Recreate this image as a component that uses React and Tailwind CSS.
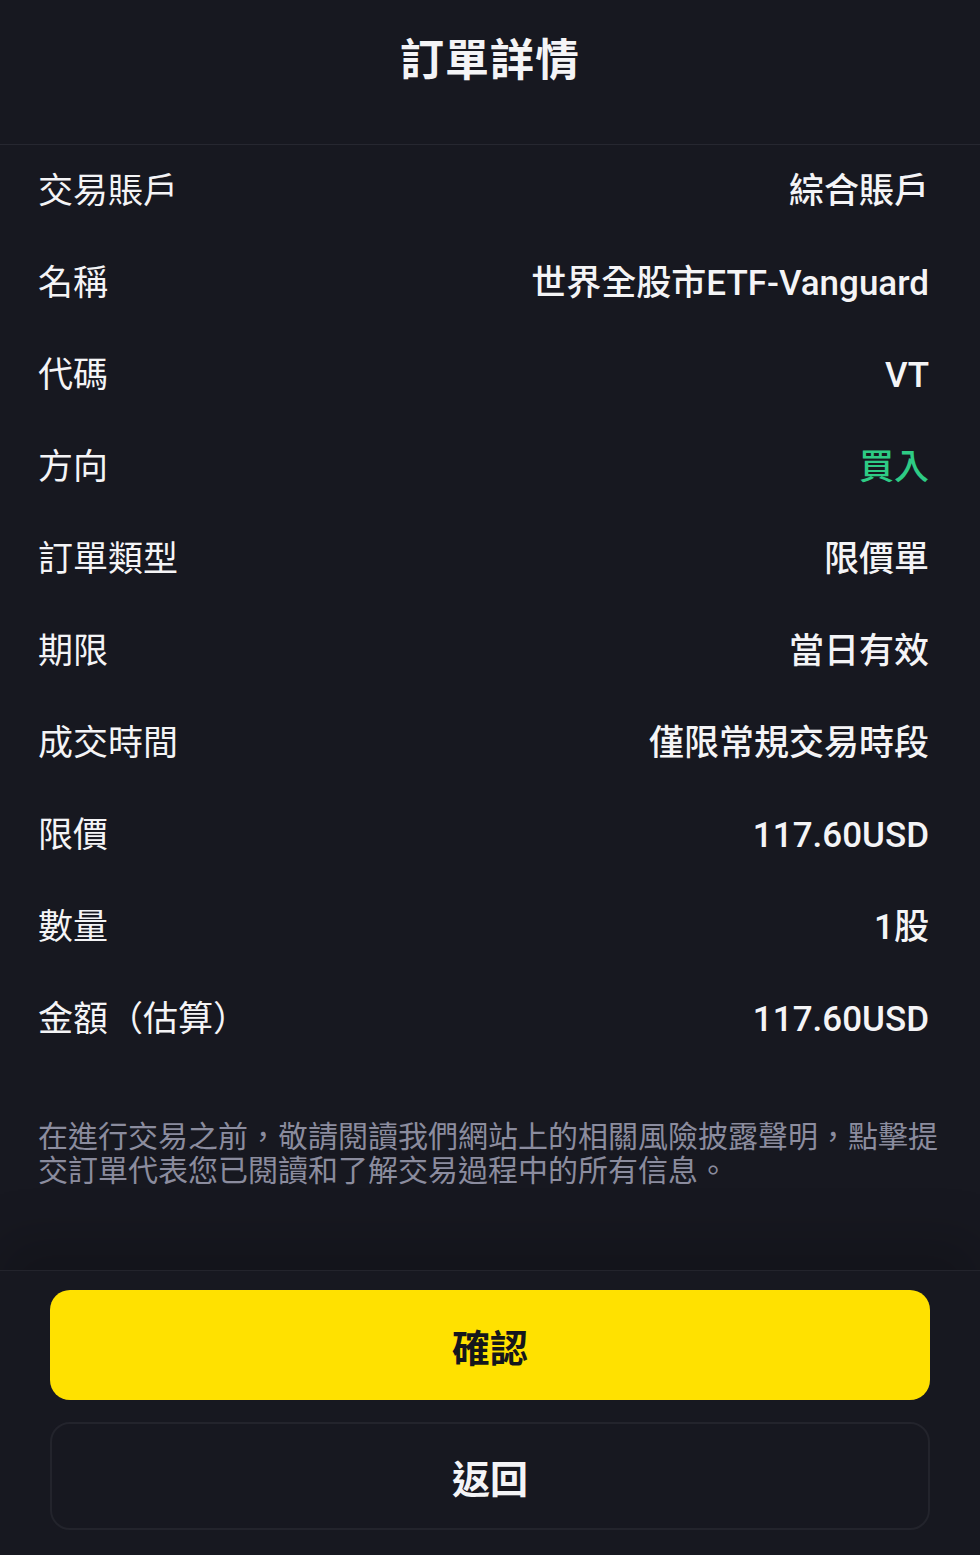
import React from "react";

const rows = [
  { label: "交易賬戶", value: "綜合賬戶" },
  { label: "名稱", value: "世界全股市ETF-Vanguard" },
  { label: "代碼", value: "VT" },
  { label: "方向", value: "買入", green: true },
  { label: "訂單類型", value: "限價單" },
  { label: "期限", value: "當日有效" },
  { label: "成交時間", value: "僅限常規交易時段" },
  { label: "限價", value: "117.60USD" },
  { label: "數量", value: "1股" },
  { label: "金額（估算）", value: "117.60USD" },
];

const font = {
  fontFamily: '"Noto Sans CJK TC", "Noto Sans CJK SC", sans-serif',
};

const App = () => {
  return (
    <div
      className="w-[980px] h-[1555px] bg-[#171820] text-[#f4f4f6] flex flex-col overflow-hidden"
      style={font}
    >
      <header className="h-[145px] flex items-start justify-center pt-[24px] border-b border-[#262730]">
        <h1 className="text-[44px] leading-[66px] font-bold tracking-[1px]">訂單詳情</h1>
      </header>

      <div className="flex-1 flex flex-col">
        <div
          className="flex flex-col pl-[38px] pr-[51px]"
          style={{ fontFamily: 'Roboto, "Noto Sans CJK TC", sans-serif' }}
        >
          {rows.map((row, i) => (
            <div key={i} className="h-[92px] flex items-center justify-between">
              <span className="text-[35px] leading-none">{row.label}</span>
              <span
                className={
                  "text-[35px] leading-none font-medium " +
                  (row.green ? "text-[#2ecb85]" : "text-[#f4f4f6]")
                }
              >
                {row.value}
              </span>
            </div>
          ))}
        </div>

        <p className="px-[38px] mt-[52px] text-[30px] leading-[34px] text-[#8b8c9e]">
          在進行交易之前，敬請閱讀我們網站上的相關風險披露聲明，點擊提交訂單代表您已閱讀和了解交易過程中的所有信息。
        </p>
      </div>

      <footer className="relative border-t border-[#23242c] bg-[#171820] px-[50px] pt-[19px] pb-[25px] flex flex-col gap-[22px] shadow-[0_-30px_50px_rgba(0,0,0,0.18)]">
        <button className="h-[110px] rounded-[20px] bg-[#ffe100] text-[#15161c] text-[38px] font-bold">
          確認
        </button>
        <button className="h-[108px] rounded-[20px] border-2 border-[#23242c] text-[#f4f4f6] text-[38px] font-bold">
          返回
        </button>
      </footer>
    </div>
  );
};

export default App;
